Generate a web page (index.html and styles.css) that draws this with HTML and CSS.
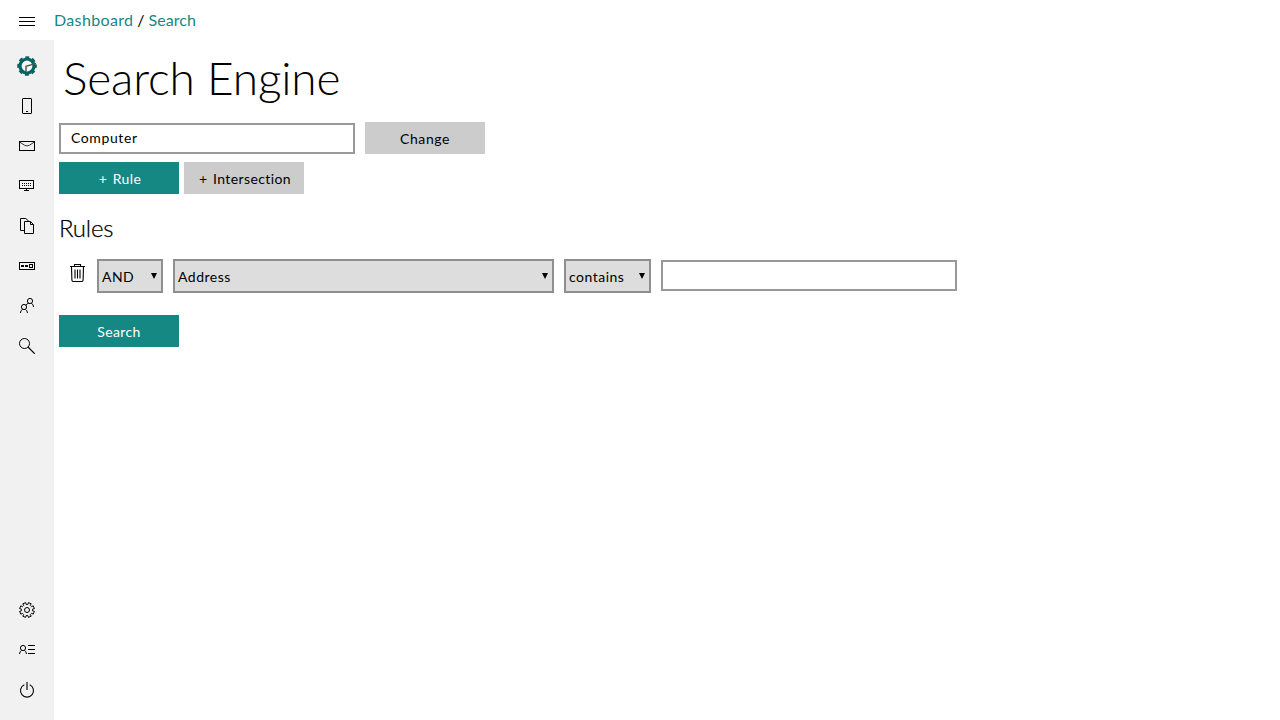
FILE: index.html
```html
<!DOCTYPE html>
<html lang="en">
<head>
<meta charset="utf-8">
<title>Search Engine</title>
<link rel="stylesheet" href="styles.css">
</head>
<body>
<header class="topbar">
  <a class="menu"><svg class="icon crisp" viewBox="0 0 16 16"><path d="M0 4.5h16M0 8.5h16M0 12.5h16"/></svg></a>
  <nav class="crumbs"><a>Dashboard</a><span class="slash">/</span><a>Search</a></nav>
</header>
<div class="body">
  <aside class="sidebar">
    <a class="item"><svg class="logo" viewBox="-10 -10 20 20"><circle r="5.500" fill="#f8f8f8"/><circle r="7" fill="none" stroke="#066362" stroke-width="3.200"/><circle r="8.400" fill="none" stroke="#066362" stroke-width="2.800" stroke-dasharray="3.800 2.797" stroke-dashoffset="1.900"/><path d="M-1 5.500V.2L9-2.600" fill="none" stroke="#555" stroke-width="1.500"/></svg></a>
    <a class="item"><svg class="icon" viewBox="0 0 16 16"><rect x="3.500" y=".5" width="9" height="15" rx=".5"/><path d="M7 13.500h2"/></svg></a>
    <a class="item"><svg class="icon" viewBox="0 0 16 16"><rect x=".5" y="3.500" width="15" height="9"/><path d="M1 4.300l4.700 3q2.300 1.300 4.600 0l4.700-3" stroke="#333"/></svg></a>
    <a class="item"><svg class="icon crisp" viewBox="0 0 16 16"><path d="M.5 2.500h14v8H.5zM7.500 11v1M5 12.500h5M3 5.500h1m1 0h1m1 0h1m1 0h1m1 0h1M3 7.500h1m1 0h1m1 0h1m1 0h1m1 0h1"/></svg></a>
    <a class="item"><svg class="icon" viewBox="0 0 16 16"><path d="M5 12.500H1.500V.5h5.300L10 3.500M5.500 3.500h6l3 3v9h-9zM11.500 3.500v3h3"/></svg></a>
    <a class="item"><svg class="icon crisp" viewBox="0 0 16 16"><path d="M.5 4.500h15v7H.5zM10.500 6.500h3v3h-3z"/><path d="M2 8h3M6 8h3" stroke-width="2"/></svg></a>
    <a class="item"><svg class="icon" viewBox="0 0 16 16"><circle cx="5" cy="9" r="2.600"/><circle cx="11" cy="3" r="2.600"/><path d="M1.400 15q.4-3 2.300-3.800M8.500 15q-.4-3-2.200-3.800M7 7.300q1-2 2.700-2.100M14.600 9q-.4-3-2.300-3.800"/></svg></a>
    <a class="item"><svg class="icon" viewBox="0 0 16 16"><circle cx="5.500" cy="5.500" r="5"/><path d="M9 9l6.700 6.700" stroke-width="1.200"/></svg></a>
    <div class="spacer"></div>
    <a class="item"><svg class="icon" viewBox="-8 -8 16 16"><path d="M-1.400-7.400L-.9-5.600H.9L1.400-7.400 4.200-6.200 3.300-4.600 4.600-3.300 6.200-4.200 7.400-1.400 5.600-.9V.9L7.400 1.400 6.200 4.200 4.600 3.300 3.300 4.600 4.200 6.200 1.400 7.400 .9 5.600H-.9L-1.400 7.400-4.200 6.200-3.300 4.600-4.600 3.300-6.200 4.200-7.400 1.400-5.600 .9V-.9L-7.400-1.400-6.200-4.200-4.600-3.300-3.300-4.600-4.200-6.200z"/><circle r="2.500"/></svg></a>
    <a class="item"><svg class="icon" viewBox="0 0 16 16"><circle cx="4" cy="6" r="2.600"/><path d="M.5 12q.4-3 2.200-3.700M7.500 12q-.4-3-2.200-3.700M9 3.500h7M9 7.500h7M9 11.500h7"/></svg></a>
    <a class="item"><svg class="icon" viewBox="0 0 16 16"><path d="M5.300 2.700a6.500 6.500 0 1 0 5.400 0" stroke-width="1.100"/><path d="M8 0v8" stroke="#666" stroke-width="2"/></svg></a>
  </aside>
  <main class="content">
    <h1>Search Engine</h1>
    <div class="row">
      <input class="field" type="text" value="Computer">
      <button class="btn gray change">Change</button>
    </div>
    <div class="row actions">
      <button class="btn teal add"><span class="plus">+</span>Rule</button>
      <button class="btn gray add"><span class="plus">+</span>Intersection</button>
    </div>
    <h2>Rules</h2>
    <div class="rule">
      <svg class="trash" viewBox="0 0 15 18"><path d="M0 2.500h15M4.500 2.500V.5h6v2M1.500 3l.4 13q0 1.500 1.400 1.500h8.400q1.400 0 1.400-1.500l.4-13M5 5.500v9M7.500 5.500v9M10 5.500v9"/></svg>
      <div class="select and">AND<span class="arrow"></span></div>
      <div class="select property">Address<span class="arrow"></span></div>
      <div class="select operator">contains<span class="arrow"></span></div>
      <input class="field" type="text">
    </div>
    <button class="btn teal submit">Search</button>
  </main>
</div>
</body>
</html>
```
FILE: styles.css
```css
* { box-sizing: border-box; }
body {
  margin: 0;
  height: 720px;
  display: flex;
  flex-direction: column;
  overflow: hidden;
  background: #fff;
  color: #000;
  font-family: Lato, "Open Sans", sans-serif;
  font-size: 14px;
}
.topbar { height: 40px; display: flex; align-items: center; }
.menu { width: 54px; display: flex; justify-content: center; padding-top: 2px; }
.icon { width: 16px; height: 16px; fill: none; stroke: #000; stroke-width: 1; display: block; }
.crisp { shape-rendering: crispEdges; }
.crumbs { font-size: 16px; letter-spacing: .35px; line-height: 40px; }
.crumbs a { color: #168884; }
.crumbs a:last-child { letter-spacing: .05px; }
.slash { margin: 0 3.8px; }
.body { flex: 1; display: flex; }
.sidebar { width: 54px; background: #f1f1f1; padding: 6px 0 10px; display: flex; flex-direction: column; }
.item { height: 40px; display: flex; align-items: center; justify-content: center; }
.logo { width: 20px; height: 20px; }
.spacer { flex: 1; }
.content { flex: 1; padding: 0 5px; }
h1 {
  margin: 0;
  padding-left: 4px;
  height: 82px;
  font-size: 46px;
  font-weight: 300;
  line-height: 76px;
  letter-spacing: -.15px;
}
.row { display: flex; align-items: center; gap: 10px; height: 32px; }
.actions { gap: 5px; margin-top: 8px; }
.field {
  width: 296px;
  height: 31px;
  border: 2px solid #999;
  padding: 0 10px 2px;
  background: #fff;
  font: inherit;
  letter-spacing: .6px;
  outline: none;
}
.row .field { margin-top: 1px; }
.rule .field { margin-top: -2px; }
.btn {
  width: 120px;
  height: 32px;
  border: 0;
  padding: 0;
  font: inherit;
  letter-spacing: .4px;
  color: #000;
}
.change { letter-spacing: .6px; }
.add { padding-left: 2px; }
.plus { margin-right: 5.5px; }
.gray { background: #ccc; }
.teal { background: #168884; color: #fff; }
h2 { margin: 15px 0 0; height: 38px; line-height: 38px; font-size: 24px; font-weight: 300; letter-spacing: -.2px; -webkit-text-stroke: .25px #000; }
.rule { display: flex; align-items: center; height: 34px; margin-top: 12px; padding-left: 11px; }
.trash { width: 15px; height: 18px; margin: -6px 12px 0 0; fill: none; stroke: #000; stroke-width: 1.1; }
.select {
  height: 34px;
  border: 2px solid #8f8f8f;
  background: #ddd;
  margin-right: 10px;
  padding: 0 4px 0 3px;
  display: flex;
  align-items: center;
  justify-content: space-between;
  letter-spacing: .5px;
}
.and { width: 66px; letter-spacing: .4px; }
.property { width: 381px; }
.operator { width: 87px; }
.arrow { width: 6px; height: 6px; background: #000; clip-path: polygon(0 0, 100% 0, 50% 100%); }
.submit { display: block; margin-top: 22px; }
```
